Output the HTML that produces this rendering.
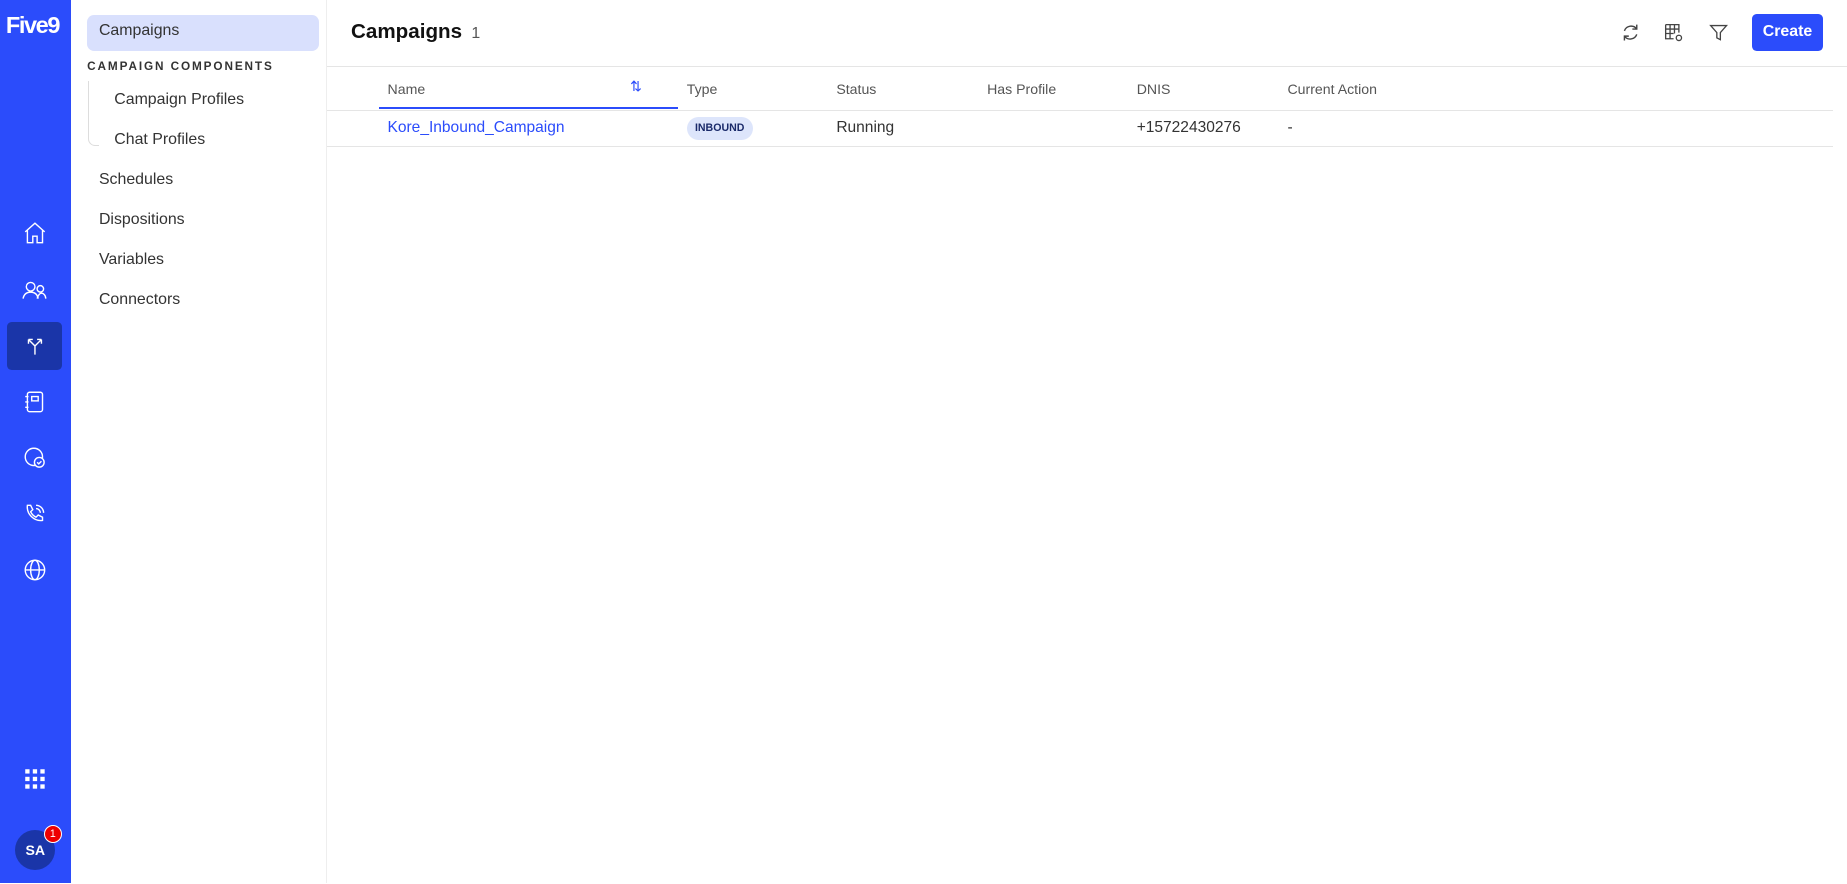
<!DOCTYPE html>
<html><head><style>
html{zoom:1.17793}
body{margin:0;width:1568px;height:750px;overflow:hidden;font-family:"Liberation Sans",sans-serif;background:#fff;position:relative;color:#333}
.rail{position:absolute;left:0;top:0;width:60px;height:750px;background:#2b4cfb}
.logo{position:absolute;left:5px;top:10px;color:#fff;font-weight:bold;font-size:20px;letter-spacing:-1.2px}
.ic{position:absolute;left:19px;width:22px;height:22px}
.sel{position:absolute;left:6px;top:273px;width:47px;height:41px;background:#1a35a8;border-radius:4px}
.nav{position:absolute;left:60px;top:0;width:217px;height:750px;border-right:1px solid #eee}
.nav div{position:absolute;font-size:13.5px;color:#333}
.main{position:absolute;left:278px;top:0;right:0}
.th{position:absolute;top:69px;font-size:12px;color:#555}
.td{position:absolute;top:101px;font-size:13.2px;color:#333}
</style></head><body>
<div class="rail">
<div class="logo">Five9</div>
<svg class="ic" style="top:187px" viewBox="0 0 24 24" fill="none" stroke="#fff" stroke-width="1.3"><path d="M3 11L12 3l9 8M5 9v12h5v-6h4v6h5V9"/></svg>
<svg class="ic" style="top:235px" viewBox="0 0 24 24" fill="none" stroke="#fff" stroke-width="1.3"><circle cx="8" cy="9" r="4"/><circle cx="17" cy="11" r="3"/><path d="M1 20c1-5 4-6 7-6s6 1 7 6M14 20c1-3 2-5 4-5s4 2 4 5"/></svg>
<div class="sel"></div>
<svg class="ic" style="top:283px" viewBox="0 0 24 24" fill="none" stroke="#fff" stroke-width="1.3"><path d="M6 6l6 6v8M12 12l6-6M6 6h4M6 6v4M18 6h-4M18 6v4"/></svg>
<svg class="ic" style="top:330px" viewBox="0 0 24 24" fill="none" stroke="#fff" stroke-width="1.3"><rect x="5" y="3" width="14" height="18" rx="2"/><rect x="9" y="7" width="6" height="4"/><path d="M3 7h3M3 12h3M3 17h3"/></svg>
<svg class="ic" style="top:378px" viewBox="0 0 24 24" fill="none" stroke="#fff" stroke-width="1.3"><circle cx="11" cy="11" r="8"/><circle cx="16" cy="16" r="4.5" fill="#2b4cfb"/><path d="M14 16l1.5 1.5L18 15"/></svg>
<svg class="ic" style="top:425px" viewBox="0 0 24 24" fill="none" stroke="#fff" stroke-width="1.3"><path d="M5 4l3 0 2 4-2 2c1 2 3 4 5 5l2-2 4 2v3c-8 1-15-6-14-14zM13 7a4 4 0 014 4M13 4a7 7 0 017 7"/></svg>
<svg class="ic" style="top:473px" viewBox="0 0 24 24" fill="none" stroke="#fff" stroke-width="1.3"><circle cx="12" cy="12" r="9"/><ellipse cx="12" cy="12" rx="4" ry="9"/><path d="M3 12h18"/></svg>
<svg class="ic" style="top:650px" viewBox="0 0 24 24" fill="#fff"><rect x="3" y="3" width="4" height="4"/><rect x="10" y="3" width="4" height="4"/><rect x="17" y="3" width="4" height="4"/><rect x="3" y="10" width="4" height="4"/><rect x="10" y="10" width="4" height="4"/><rect x="17" y="10" width="4" height="4"/><rect x="3" y="17" width="4" height="4"/><rect x="10" y="17" width="4" height="4"/><rect x="17" y="17" width="4" height="4"/></svg>
<div style="position:absolute;left:13px;top:705px;width:34px;height:34px;border-radius:50%;background:#1a35a8;color:#fff;font-size:12px;font-weight:bold;text-align:center;line-height:34px">SA</div>
<div style="position:absolute;left:37px;top:700px;width:14px;height:14px;border-radius:50%;background:#e00;border:1px solid #fff;color:#fff;font-size:9px;text-align:center;line-height:14px">1</div>
</div>
<div class="nav">
<div style="left:14px;top:13px;width:197px;height:30px;background:#d9e0fd;border-radius:6px"></div>
<div style="left:24px;top:19px">Campaigns</div>
<div style="left:14px;top:51px;font-size:10px;font-weight:bold;letter-spacing:1.6px;color:#333">CAMPAIGN COMPONENTS</div>
<div style="left:15px;top:69px;width:8px;height:54px;border-left:1px solid #ddd;border-bottom:1px solid #ddd;border-bottom-left-radius:6px"></div>
<div style="left:37px;top:77px">Campaign Profiles</div>
<div style="left:37px;top:111px">Chat Profiles</div>
<div style="left:24px;top:145px">Schedules</div>
<div style="left:24px;top:179px">Dispositions</div>
<div style="left:24px;top:213px">Variables</div>
<div style="left:24px;top:247px">Connectors</div>
</div>
<div class="main">
<div style="position:absolute;left:20px;top:17px;font-size:17.5px;font-weight:bold;color:#111">Campaigns <span style="font-weight:normal;font-size:13.5px;color:#555;margin-left:3px">1</span></div>
<svg style="position:absolute;left:1097px;top:19px" width="18" height="18" viewBox="0 0 24 24" fill="none" stroke="#444" stroke-width="1.6"><path d="M19 8a8 8 0 00-14 2M5 16a8 8 0 0014-2M19 3v5h-5M5 21v-5h5"/></svg>
<svg style="position:absolute;left:1134px;top:19px" width="18" height="18" viewBox="0 0 24 24" fill="none" stroke="#444" stroke-width="1.5"><path d="M3 3h15v9M3 3v16h9M3 8h15M3 13h9M8 3v16M13 3v10"/><circle cx="18" cy="18" r="3"/></svg>
<svg style="position:absolute;left:1172px;top:19px" width="18" height="18" viewBox="0 0 24 24" fill="none" stroke="#444" stroke-width="1.5"><path d="M3 4h18l-7 8v8l-4-2v-6z"/></svg>
<div style="position:absolute;left:1209px;top:12px;width:61px;height:31px;background:#2b4cfb;border-radius:4px;color:#fff;font-size:13.5px;font-weight:bold;text-align:center;line-height:31px">Create</div>
<div style="position:absolute;left:0;right:0;top:56px;border-top:1px solid #e5e5e5"></div>
<div class="th" style="left:51px">Name</div>
<div style="position:absolute;left:257px;top:66px;color:#2b4cfb;font-size:12px">⇅</div>
<div style="position:absolute;left:44px;top:91px;width:254px;border-top:2px solid #2b4cfb"></div>
<div class="th" style="left:305px">Type</div>
<div class="th" style="left:432px">Status</div>
<div class="th" style="left:560px">Has Profile</div>
<div class="th" style="left:687px">DNIS</div>
<div class="th" style="left:815px">Current Action</div>
<div style="position:absolute;left:0;right:12px;top:93px;border-top:1px solid #e5e5e5"></div>
<div class="td" style="left:51px;color:#2b4cfb">Kore_Inbound_Campaign</div>
<div style="position:absolute;left:305px;top:99px;padding:0 7px;height:20px;line-height:20px;border-radius:10px;background:#dde5fb;font-size:9px;font-weight:bold;color:#1a2a6a">INBOUND</div>
<div class="td" style="left:432px">Running</div>
<div class="td" style="left:687px">+15722430276</div>
<div class="td" style="left:815px">-</div>
<div style="position:absolute;left:0;right:12px;top:124px;border-top:1px solid #e5e5e5"></div>
</div>
</body></html>
